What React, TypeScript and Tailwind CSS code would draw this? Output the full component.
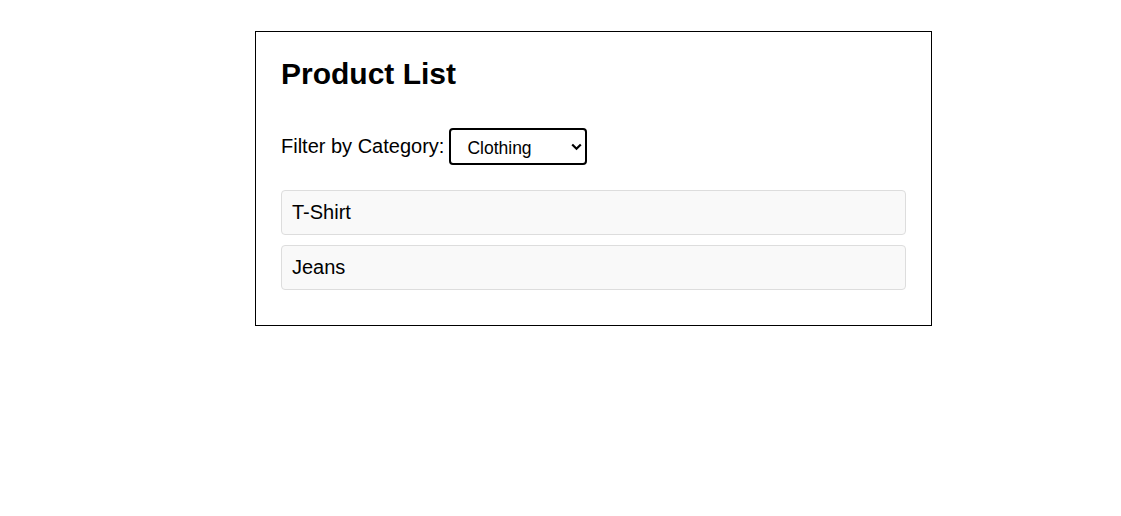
import { useState } from "react";

type Product = {
  name: string;
  category: string;
};

const products: Product[] = [
  { name: "T-Shirt", category: "Clothing" },
  { name: "Jeans", category: "Clothing" },
  { name: "Laptop", category: "Electronics" },
  { name: "Headphones", category: "Electronics" },
];

const categories = ["All", "Clothing", "Electronics"];

export default function App() {
  const [category, setCategory] = useState("Clothing");
  const visible = products.filter(
    (p) => category === "All" || p.category === category
  );

  return (
    <div className="min-h-screen bg-white text-black font-['Liberation_Sans',Arial,sans-serif]">
      <div className="ml-[255px] pt-[31px] w-[677px]">
        <div className="border border-black px-[25px] pt-[25px] pb-[35px]">
          <h2 className="text-[30px] font-bold leading-[34px]">Product List</h2>

          <div className="mt-[37px] flex items-center gap-[5px] h-[36px]">
            <label htmlFor="category" className="text-[20px] leading-[23px] pt-[1px]">
              Filter by Category:
            </label>
            <div className="relative">
              <select
                id="category"
                value={category}
                onChange={(e) => setCategory(e.target.value)}
                className="appearance-none w-[138px] h-[37px] border-2 border-black rounded-[4px] bg-white pl-[16px] pt-[3px] text-[17.5px] leading-[20px] text-black outline-none"
              >
                {categories.map((c) => (
                  <option key={c} value={c}>
                    {c}
                  </option>
                ))}
              </select>
              <svg
                className="pointer-events-none absolute right-[5px] top-[15px] w-[11px] h-[8px]"
                viewBox="0 0 11 8"
                fill="none"
                stroke="black"
                strokeWidth="2.2"
              >
                <path d="M1.2 1.5 L5.5 5.8 L9.8 1.5" />
              </svg>
            </div>
          </div>

          <ul className="mt-[26px] flex flex-col gap-[10px]">
            {visible.map((p) => (
              <li
                key={p.name}
                className="h-[45px] flex items-center px-[10px] pb-[2px] border border-[#dddddd] bg-[#f9f9f9] rounded-[4px] text-[20px]"
              >
                {p.name}
              </li>
            ))}
          </ul>
        </div>
      </div>
    </div>
  );
}
